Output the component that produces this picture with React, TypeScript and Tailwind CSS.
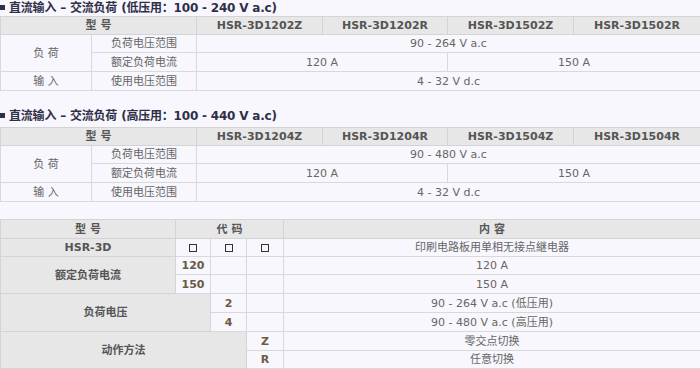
import React from 'react';

const hd = 'bg-[#e7e7e7] border border-[#d4d4d4] font-bold text-[#555] text-center p-0';
const td = 'bg-[#f7f7fd] border border-[#d9d9d9] text-[#666] text-center p-0';
const code = 'bg-[#f7f7fd] border border-[#d9d9d9] text-[#6b5a44] font-bold text-center p-0';

const Title: React.FC<{ children: React.ReactNode }> = ({ children }) => (
  <div className="flex items-center h-[15px] text-[12px] font-bold text-[#2f2f48] leading-none tracking-[-0.2px]">
    <span className="inline-block w-[5px] h-[5px] bg-[#2f2f48] mr-[4px]" />
    {children}
  </div>
);

const Box = () => (
  <td className={td}>
    <span className="inline-block align-middle w-[8px] h-[8px] border-[1.5px] border-[#333]" />
  </td>
);

const SpecTable: React.FC<{ models: string[]; voltage: string }> = ({ models, voltage }) => (
  <table className="table-fixed border-collapse w-[700px] text-[11px] leading-[13px]">
    <colgroup>
      <col className="w-[91px]" />
      <col className="w-[105px]" />
      <col className="w-[126px]" />
      <col className="w-[125px]" />
      <col className="w-[126px]" />
      <col className="w-[127px]" />
    </colgroup>
    <tbody>
      <tr className="h-[18px]">
        <td colSpan={2} className={hd}>型 号</td>
        {models.map((m) => (
          <td key={m} className={hd}>{m}</td>
        ))}
      </tr>
      <tr className="h-[18px]">
        <td rowSpan={2} className={td}>负 荷</td>
        <td className={td}>负荷电压范围</td>
        <td colSpan={4} className={td}>{voltage}</td>
      </tr>
      <tr className="h-[19px]">
        <td className={td}>额定负荷电流</td>
        <td colSpan={2} className={td}>120 A</td>
        <td colSpan={2} className={td}>150 A</td>
      </tr>
      <tr className="h-[19px]">
        <td className={td}>输 入</td>
        <td className={td}>使用电压范围</td>
        <td colSpan={4} className={td}>4 - 32 V d.c</td>
      </tr>
    </tbody>
  </table>
);

export default function App() {
  return (
    <div
      className="w-[700px] h-[369px] bg-[#f7f7fd] overflow-hidden"
      style={{ fontFamily: '"DejaVu Sans", "Noto Sans CJK SC", sans-serif' }}
    >
      <Title>直流输入 – 交流负荷 (低压用：100 - 240 V a.c)</Title>
      <div className="mt-[1px]">
        <SpecTable
          models={['HSR-3D1202Z', 'HSR-3D1202R', 'HSR-3D1502Z', 'HSR-3D1502R']}
          voltage="90 - 264 V a.c"
        />
      </div>

      <div className="mt-[17px]">
        <Title>直流输入 – 交流负荷 (高压用：100 - 440 V a.c)</Title>
      </div>
      <div className="mt-[4px]">
        <SpecTable
          models={['HSR-3D1204Z', 'HSR-3D1204R', 'HSR-3D1504Z', 'HSR-3D1504R']}
          voltage="90 - 480 V a.c"
        />
      </div>

      <table className="mt-[17px] table-fixed border-collapse w-[700px] text-[11px] leading-[13px]">
        <colgroup>
          <col className="w-[175px]" />
          <col className="w-[35px]" />
          <col className="w-[36px]" />
          <col className="w-[37px]" />
          <col className="w-[417px]" />
        </colgroup>
        <tbody>
          <tr className="h-[19px]">
            <td className={hd}>型 号</td>
            <td colSpan={3} className={hd}>代 码</td>
            <td className={hd}>内 容</td>
          </tr>
          <tr className="h-[18px]">
            <td className={hd}>HSR-3D</td>
            <Box />
            <Box />
            <Box />
            <td className={td}>印刷电路板用单相无接点継电器</td>
          </tr>
          <tr className="h-[18px]">
            <td rowSpan={2} className={hd}>额定负荷电流</td>
            <td className={code}>120</td>
            <td className={td}></td>
            <td className={td}></td>
            <td className={td}>120 A</td>
          </tr>
          <tr className="h-[19px]">
            <td className={code}>150</td>
            <td className={td}></td>
            <td className={td}></td>
            <td className={td}>150 A</td>
          </tr>
          <tr className="h-[19px]">
            <td rowSpan={2} colSpan={2} className={hd}>负荷电压</td>
            <td className={code}>2</td>
            <td className={td}></td>
            <td className={td}>90 - 264 V a.c (低压用)</td>
          </tr>
          <tr className="h-[19px]">
            <td className={code}>4</td>
            <td className={td}></td>
            <td className={td}>90 - 480 V a.c (高压用)</td>
          </tr>
          <tr className="h-[19px]">
            <td rowSpan={2} colSpan={3} className={hd}>动作方法</td>
            <td className={code}>Z</td>
            <td className={td}>零交点切换</td>
          </tr>
          <tr className="h-[18px]">
            <td className={code}>R</td>
            <td className={td}>任意切换</td>
          </tr>
        </tbody>
      </table>
    </div>
  );
}
